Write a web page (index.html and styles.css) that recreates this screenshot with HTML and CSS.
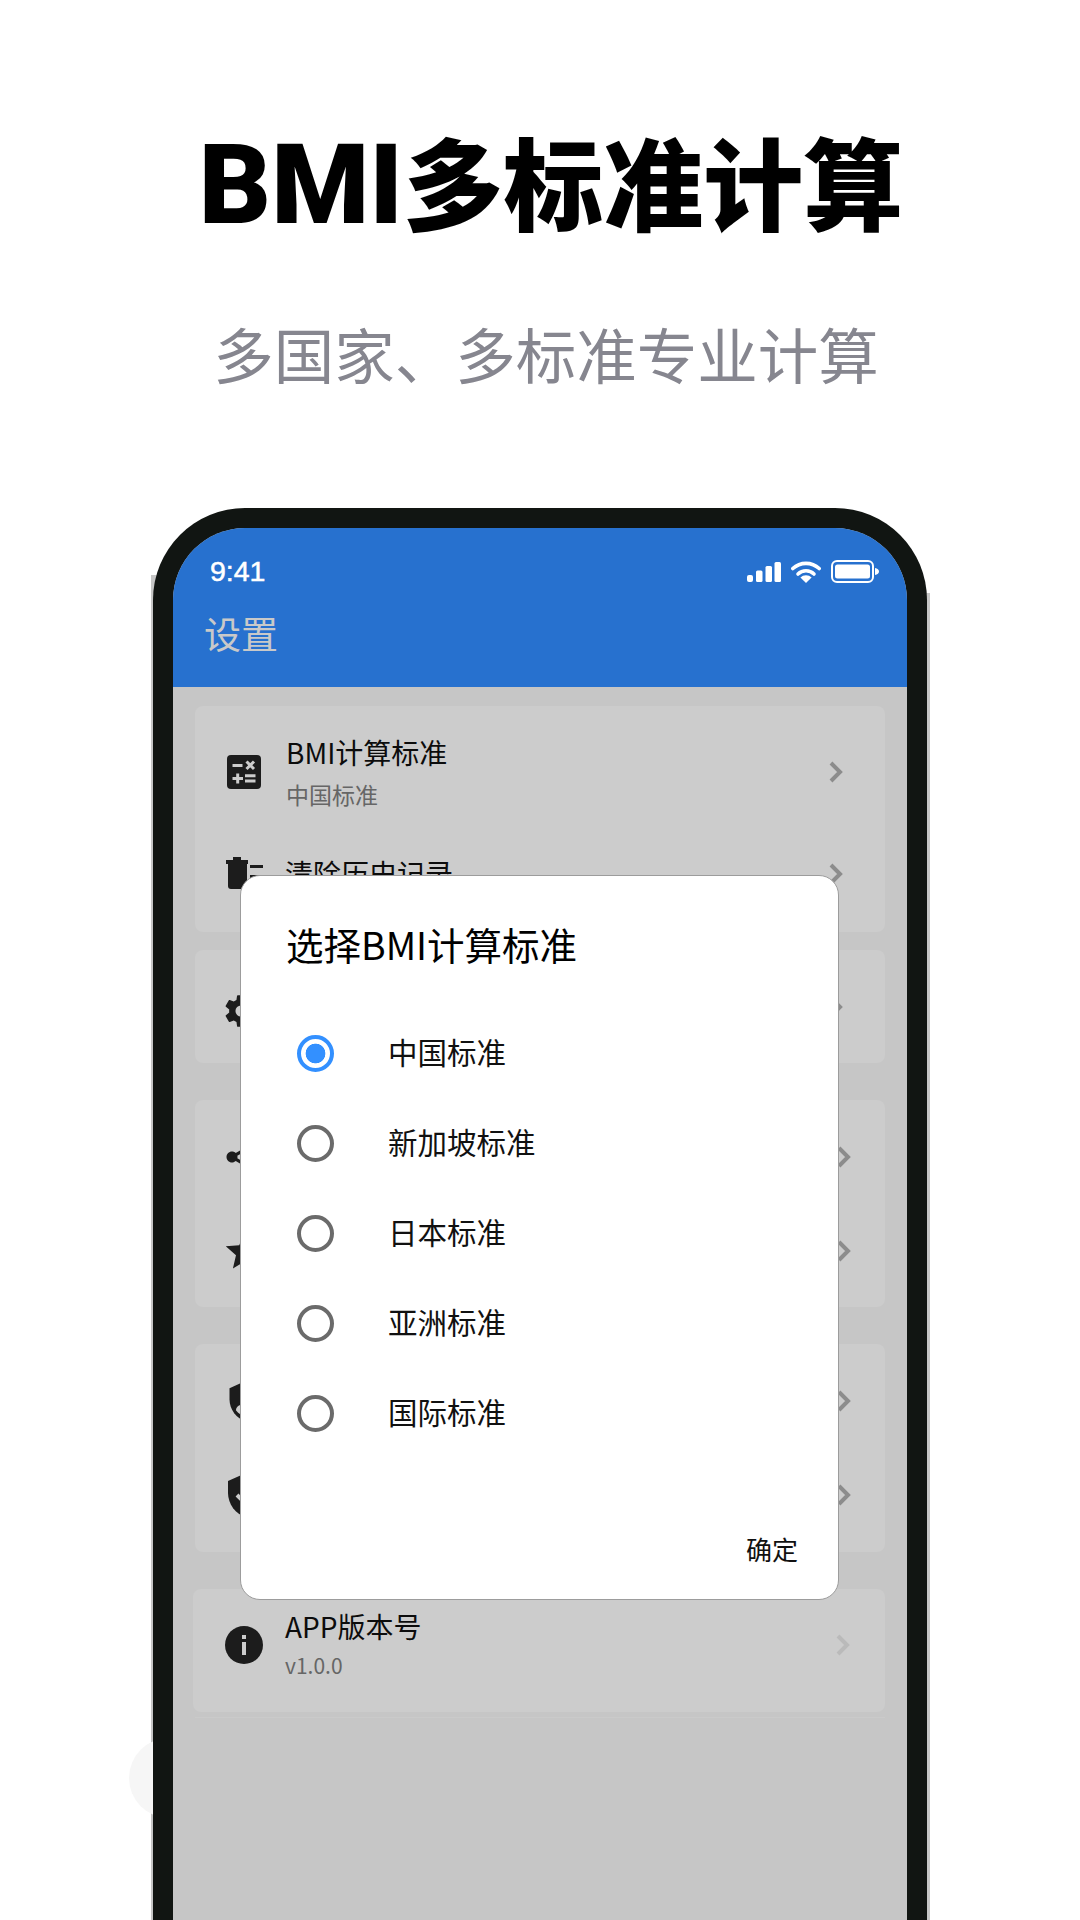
FILE: index.html
```html
<!DOCTYPE html>
<html lang="zh-CN">
<head>
<meta charset="utf-8">
<title>BMI多标准计算</title>
<link rel="stylesheet" href="styles.css">
</head>
<body>
<div class="ghost-circle"></div>
<header class="hero">
  <h1 class="hero-title"><span class="latin">BMI</span>多标准计算</h1>
  <p class="hero-sub">多国家、多标准专业计算</p>
</header>
<div class="phone">
  <div class="screen">
    <div class="appbar">
      <div class="status">
        <span class="time">9:41</span>
        <span class="status-icons">
          <svg class="signal" viewBox="0 0 34 20"><rect x="0" y="13" width="6" height="7" rx="2"/><rect x="9" y="8.500" width="6.500" height="11.500" rx="1.500"/><rect x="18.500" y="4" width="6.500" height="16" rx="1.500"/><rect x="27.500" y="0" width="6.500" height="20" rx="1.500"/></svg>
          <svg class="wifi" viewBox="0 0 30 22"><path d="M1.800 7.500a19.500 19.500 0 0 1 26.400 0" fill="none" stroke="#fff" stroke-width="3.600" stroke-linecap="round"/><path d="M7 13a11.500 11.500 0 0 1 16 0" fill="none" stroke="#fff" stroke-width="3.600" stroke-linecap="round"/><path d="M15 22l-5.600-5.400a7.800 7.800 0 0 1 11.200 0z"/></svg>
          <svg class="battery" viewBox="0 0 48 23"><rect x="1" y="1" width="41" height="21" rx="5" fill="none" stroke="#fff" stroke-width="2"/><rect x="4" y="4.500" width="35" height="14" rx="2.500"/><path d="M44 8c2.500.300 4 1.800 4 3.500s-1.500 3.200-4 3.500z"/></svg>
        </span>
      </div>
      <div class="appbar-title">设置</div>
    </div>
    <main class="content">
      <section class="card card-a">
        <div class="row row-bmi">
          <svg class="ico" viewBox="0 0 34 34"><rect width="34" height="34" rx="4" fill="#1c1c1c"/><g stroke="#ccc" stroke-width="3" fill="none"><path d="M5.500 10.500h10M19.500 6.500l7.500 7.500M27 6.500 19.500 14M5.500 23.500H16M10.700 18.500v10M18 20.800h10.500M18 26h10.500"/></g></svg>
          <div class="txt"><div class="t">BMI计算标准</div><div class="s">中国标准</div></div>
          <svg class="chev" viewBox="0 0 14 22"><path d="M2 2l9 9-9 9"/></svg>
        </div>
        <div class="row row-clear">
          <svg class="ico ico-trash" viewBox="0 0 37 34"><path fill="#1c1c1c" d="M0 3h22v4H0zM7 0h8v3H7zM2 7h19v22a3 3 0 0 1-3 3H5a3 3 0 0 1-3-3zM24 8h13v3H24zM24 18h10v3H24z"/></svg>
          <div class="txt"><div class="t">清除历史记录</div></div>
          <svg class="chev" viewBox="0 0 14 22"><path d="M2 2l9 9-9 9"/></svg>
        </div>
      </section>
      <section class="card card-b">
        <div class="row row-one">
          <svg class="ico ico-gear" viewBox="0 0 24 24"><path fill="#1c1c1c" d="M19.400 13c.04-.3.060-.65.060-1s-.02-.7-.07-1l2.100-1.650c.2-.15.240-.42.120-.64l-2-3.460c-.12-.22-.4-.3-.6-.22l-2.500 1c-.52-.4-1.080-.73-1.700-.98l-.37-2.650A.506.506 0 0 0 14 2h-4c-.25 0-.46.180-.5.420l-.37 2.650c-.62.250-1.180.590-1.700.980l-2.500-1c-.22-.080-.48 0-.6.220l-2 3.460c-.13.220-.070.490.120.640L4.570 11c-.04.320-.07.660-.07 1s.03.680.07 1l-2.100 1.650c-.2.150-.250.420-.12.640l2 3.460c.12.220.4.300.6.220l2.500-1c.52.400 1.080.730 1.700.980l.37 2.650c.04.240.250.420.5.420h4c.25 0 .46-.180.5-.420l.37-2.650c.62-.250 1.180-.590 1.700-.980l2.500 1c.22.080.48 0 .6-.220l2-3.460c.12-.220.080-.490-.12-.640zM12 15.500a3.500 3.500 0 1 1 0-7 3.500 3.500 0 0 1 0 7z"/></svg>
          <div class="txt"><div class="t">设置选项</div></div>
          <svg class="chev" viewBox="0 0 14 22"><path d="M2 2l9 9-9 9"/></svg>
        </div>
      </section>
      <section class="card card-c">
        <div class="row row-two">
          <svg class="ico ico-share" viewBox="0 0 24 24"><path fill="#1c1c1c" d="M18 16.080c-.76 0-1.440.3-1.960.770L8.910 12.700c.050-.230.090-.460.090-.7s-.040-.470-.090-.7l7.050-4.110c.54.500 1.250.810 2.040.810 1.660 0 3-1.340 3-3s-1.340-3-3-3-3 1.340-3 3c0 .240.040.470.090.7L8.040 9.810C7.500 9.310 6.790 9 6 9c-1.660 0-3 1.340-3 3s1.340 3 3 3c.79 0 1.500-.310 2.040-.810l7.120 4.160c-.050.210-.080.430-.080.650 0 1.610 1.310 2.920 2.920 2.920s2.920-1.310 2.920-2.920-1.310-2.920-2.920-2.920z"/></svg>
          <div class="txt"><div class="t">分享应用</div></div>
          <svg class="chev" viewBox="0 0 14 22"><path d="M2 2l9 9-9 9"/></svg>
        </div>
        <div class="row row-two">
          <svg class="ico ico-star" viewBox="0 0 24 24"><path fill="#1c1c1c" d="M12 17.270 18.180 21l-1.640-7.030L22 9.240l-7.190-.61L12 2 9.190 8.630 2 9.240l5.460 4.730L5.820 21z"/></svg>
          <div class="txt"><div class="t">给个好评</div></div>
          <svg class="chev" viewBox="0 0 14 22"><path d="M2 2l9 9-9 9"/></svg>
        </div>
      </section>
      <section class="card card-d">
        <div class="row row-two">
          <svg class="ico ico-shield-a" viewBox="0 0 24 24"><path fill="#1c1c1c" d="M12 1 3 5v6c0 5.550 3.840 10.740 9 12 5.160-1.260 9-6.450 9-12V5z"/><circle cx="12" cy="9.500" r="3" fill="#ccc"/><path fill="#ccc" d="M6.500 17c0-2.500 3.500-3.700 5.500-3.700s5.500 1.200 5.500 3.700c-1.500 2-3.500 3-5.500 3.500-2-.5-4-1.500-5.500-3.500z"/></svg>
          <div class="txt"><div class="t">用户协议</div></div>
          <svg class="chev" viewBox="0 0 14 22"><path d="M2 2l9 9-9 9"/></svg>
        </div>
        <div class="row row-two">
          <svg class="ico ico-shield-b" viewBox="0 0 24 24"><path fill="#1c1c1c" d="M12 1 3 5v6c0 5.550 3.840 10.740 9 12 5.160-1.260 9-6.450 9-12V5z"/><path fill="none" stroke="#ccc" stroke-width="2" d="m7.500 12 3.200 3.200 6-6"/></svg>
          <div class="txt"><div class="t">隐私政策</div></div>
          <svg class="chev" viewBox="0 0 14 22"><path d="M2 2l9 9-9 9"/></svg>
        </div>
      </section>
      <section class="card card-e">
        <div class="row row-app">
          <svg class="ico ico-info" viewBox="0 0 38 38"><circle cx="19" cy="19" r="19" fill="#1c1c1c"/><rect x="17" y="9" width="4" height="4" fill="#ccc"/><rect x="17" y="16" width="4" height="13" fill="#ccc"/></svg>
          <div class="txt"><div class="t">APP版本号</div><div class="s s-ver">v1.0.0</div></div>
          <svg class="chev chev-light" viewBox="0 0 14 22"><path d="M2 2l9 9-9 9"/></svg>
        </div>
      </section>
      <div class="hairline"></div>
    </main>
    <div class="dialog">
      <h2 class="dialog-title">选择BMI计算标准</h2>
      <ul class="options">
        <li class="option"><span class="radio radio-on"></span><span class="opt-label">中国标准</span></li>
        <li class="option"><span class="radio"></span><span class="opt-label">新加坡标准</span></li>
        <li class="option"><span class="radio"></span><span class="opt-label">日本标准</span></li>
        <li class="option"><span class="radio"></span><span class="opt-label">亚洲标准</span></li>
        <li class="option"><span class="radio"></span><span class="opt-label">国际标准</span></li>
      </ul>
      <div class="dialog-actions"><span class="ok">确定</span></div>
    </div>
  </div>
</div>
</body>
</html>
```

FILE: styles.css
```css
* { box-sizing: border-box; }
html, body { margin: 0; padding: 0; }
body {
  width: 1080px;
  height: 1920px;
  overflow: hidden;
  position: relative;
  background: #fff;
  font-family: "Noto Sans CJK SC", "Noto Sans", sans-serif;
  color: #000;
}
.ghost-circle {
  position: absolute;
  left: 129px;
  top: 1738px;
  width: 80px;
  height: 80px;
  border-radius: 50%;
  background: #f6f6f6;
}
.hero { height: 508px; padding-top: 120px; text-align: center; }
.hero-title {
  margin: 0;
  padding-left: 22px;
  font-size: 100px;
  line-height: 120px;
  font-weight: 900;
}
.latin { font-family: Roboto, sans-serif; font-size: 112px; }
.hero-sub {
  margin: 72px 0 0;
  padding-left: 12px;
  font-size: 60.500px;
  line-height: 72px;
  font-weight: 400;
  color: #86868f;
}
.phone {
  position: relative;
  width: 774px;
  height: 1412px;
  margin-left: 153px;
  padding: 20px 20px 0;
  background: #111512;
  border-radius: 92px 92px 0 0;
}
.phone::before,
.phone::after {
  content: "";
  position: absolute;
  z-index: -1;
  bottom: 0;
  background: #c6c6c6;
}
.phone::before { left: -2px; width: 10px; top: 67px; }
.phone::after { right: -3px; width: 10px; top: 85px; }
.screen {
  position: relative;
  height: 100%;
  background: #c6c6c6;
  border-radius: 72px 72px 0 0;
  overflow: hidden;
}
.appbar { height: 159px; background: #2771cf; padding: 0 28px 0 37px; }
.status { display: flex; justify-content: space-between; align-items: center; padding-top: 29px; height: 58px; }
.time {
  font-family: "Liberation Sans", Arial, sans-serif;
  font-size: 28.500px;
  font-weight: 400;
  color: #fff;
  -webkit-text-stroke: .5px #fff;
}
.status-icons { display: flex; align-items: center; gap: 10px; fill: #fff; }
.signal { width: 34px; height: 20px; }
.wifi { width: 30px; height: 22px; }
.battery { width: 48px; height: 23px; }
.appbar-title { margin: 22px 0 0 -6px; font-size: 37px; line-height: 50px; color: #c9c9c9; }
.content { padding: 19px 22px 0; display: flex; flex-direction: column; }
.card { background: #cccccc; border-radius: 8px; }
.card-a { height: 226px; padding-top: 16px; }
.card-b { height: 113px; margin-top: 18px; }
.card-c { height: 207px; margin-top: 37px; padding-top: 10px; }
.card-d { height: 208px; margin-top: 37px; padding-top: 10px; }
.card-e { height: 123px; margin-top: 37px; margin-left: -2px; }
.row { display: flex; align-items: center; padding: 0 42px 0 32px; }
.row-bmi { height: 100px; }
.row-clear { height: 104px; }
.row-one { height: 113px; }
.row-two { height: 94px; padding-right: 34px; }
.row-app { height: 112px; padding-right: 35px; padding-left: 33px; }
.ico { width: 34px; height: 34px; flex: none; }
.ico-trash { width: 37px; height: 34px; margin: 0 -3px 0 -1px; }
.ico-gear { width: 38px; height: 38px; margin: 8px -3px 0 -5px; }
.ico-share { width: 44px; height: 44px; margin: 0 -10px 0 -6px; }
.ico-star { width: 45px; height: 45px; margin: 1px -11px 0 -5px; }
.ico-shield-a { width: 44px; height: 44px; margin: 0 -10px 0 -3px; }
.ico-shield-b { width: 48px; height: 48px; margin: 0 -14px 0 -5px; }
.ico-info { width: 38px; height: 38px; margin: 0 -3px 0 -1px; }
.txt { flex: 1; margin-left: 25px; }
.t { font-size: 28px; line-height: 38px; color: #0c0c0c; margin-top: -3px; }
.s { font-size: 23px; line-height: 30px; margin-top: 8px; color: #666; }
.s-ver { font-size: 21px; margin-top: 5px; }
.chev { width: 14px; height: 22px; flex: none; fill: none; stroke: #8c8c8c; stroke-width: 4; }
.chev-light { stroke: #bababa; }
.hairline { height: 1px; margin: 5px 0 0; background: #cacaca; }
.dialog {
  position: absolute;
  left: 67px;
  top: 347px;
  width: 599px;
  height: 725px;
  padding: 0 40px 0 45px;
  background: #fff;
  border: 1px solid #9c9c9c;
  border-radius: 20px;
  display: flex;
  flex-direction: column;
}
.dialog-title { margin: 43px 0 0; font-size: 37.500px; line-height: 50px; font-weight: 400; }
.options { list-style: none; margin: 39px 0 0; padding: 0; }
.option { height: 90px; display: flex; align-items: center; font-size: 29.500px; color: #111; padding-left: 11px; }
.opt-label { padding-bottom: 4px; }
.radio {
  width: 37px;
  height: 37px;
  margin-right: 54px;
  border-radius: 50%;
  border: 4px solid #6b6b6b;
  flex: none;
}
.radio-on { border-color: #3390ff; background: radial-gradient(circle, #3390ff 0 9.500px, #fff 10.200px); }
.dialog-actions { margin-top: auto; padding-bottom: 32px; display: flex; justify-content: flex-end; }
.ok { font-size: 26px; line-height: 36px; color: #111; }
```
